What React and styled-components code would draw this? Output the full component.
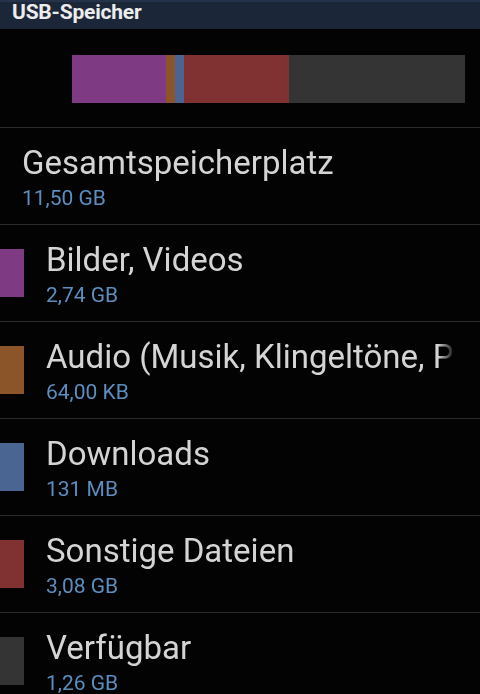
import React from 'react'
import styled, { createGlobalStyle } from 'styled-components'

const GlobalStyle = createGlobalStyle`
  html, body {
    margin: 0;
    padding: 0;
    background: #030303;
    font-family: Roboto, "Noto Sans", sans-serif;
  }
`

const Screen = styled.div`
  width: 480px;
  height: 694px;
  overflow: hidden;
  background: #030303;
`

const Header = styled.div`
  height: 29px;
  box-sizing: border-box;
  padding-left: 12px;
  background: #1b2739;
  border-top: 2px solid #25334a;
  color: #ececec;
  font-size: 21px;
  font-weight: 700;
  line-height: 21px;
  letter-spacing: -0.2px;
`

const BarArea = styled.div`
  padding: 26px 15px 24px 72px;
  border-bottom: 1px solid #2b2b2b;
`

const Bar = styled.div`
  display: flex;
  height: 48px;
`

const Segment = styled.div`
  background: ${p => p.color};
  flex: 0 0 auto;
`

const Row = styled.div`
  display: flex;
  align-items: center;
  height: 96px;
  border-bottom: 1px solid #2b2b2b;
`

const Swatch = styled.div`
  width: 24px;
  height: 48px;
  flex: 0 0 24px;
  background: ${p => p.color};
  margin-right: 22px;
`

const Text = styled.div`
  display: flex;
  flex-direction: column;
  align-self: stretch;
  padding-top: 15px;
  padding-left: ${p => (p.indent ? '22px' : '0')};
  width: 409px;
  overflow: hidden;
  -webkit-mask-image: linear-gradient(to right, #000 392px, transparent 409px);
  mask-image: linear-gradient(to right, #000 392px, transparent 409px);
`

const Title = styled.div`
  color: #d4d4d4;
  font-size: 33px;
  line-height: 39px;
  white-space: nowrap;
`

const Summary = styled.div`
  color: #5b8ebf;
  font-size: 21px;
  line-height: 25px;
  margin-top: 4px;
  white-space: nowrap;
`

const segments = [
  { color: '#7e3b83', width: 94 },
  { color: '#8c5529', width: 9 },
  { color: '#4a6591', width: 9 },
  { color: '#803232', width: 105 },
  { color: '#343434', width: 176 },
]

const items = [
  { color: '#7e3b83', title: 'Bilder, Videos', size: '2,74 GB' },
  { color: '#8c5529', title: 'Audio (Musik, Klingeltöne, Podcasts usw.)', size: '64,00 KB' },
  { color: '#4a6591', title: 'Downloads', size: '131 MB' },
  { color: '#803232', title: 'Sonstige Dateien', size: '3,08 GB' },
  { color: '#343434', title: 'Verfügbar', size: '1,26 GB' },
]

export default function App() {
  return (
    <Screen>
      <GlobalStyle />
      <Header>USB-Speicher</Header>
      <BarArea>
        <Bar>
          {segments.map((s, i) => (
            <Segment key={i} color={s.color} style={{ width: s.width }} />
          ))}
        </Bar>
      </BarArea>
      <Row>
        <Text indent>
          <Title>Gesamtspeicherplatz</Title>
          <Summary>11,50 GB</Summary>
        </Text>
      </Row>
      {items.map(item => (
        <Row key={item.title}>
          <Swatch color={item.color} />
          <Text>
            <Title>{item.title}</Title>
            <Summary>{item.size}</Summary>
          </Text>
        </Row>
      ))}
    </Screen>
  )
}
